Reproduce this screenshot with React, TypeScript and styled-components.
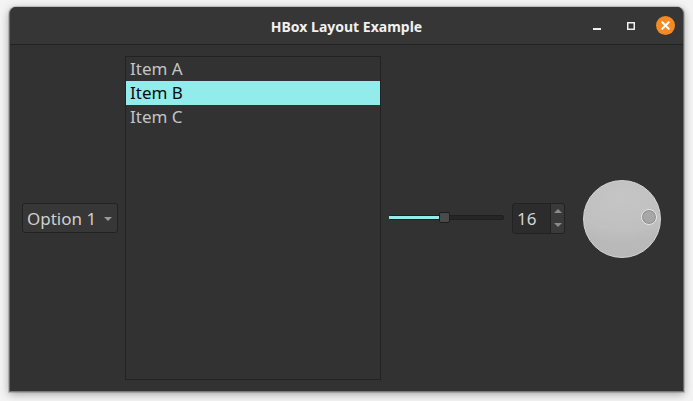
import React from "react";
import styled, { createGlobalStyle } from "styled-components";

const Global = createGlobalStyle`
  html, body { margin: 0; padding: 0; background: #f3f3f3; }
  body { width: 693px; height: 401px; overflow: hidden; font-family: "Noto Sans", "Open Sans", sans-serif; }
`;

const Stage = styled.div`
  padding: 7px 9px 9px 9px;
  display: flex;
`;

const Window = styled.div`
  width: 675px;
  height: 385px;
  display: flex;
  flex-direction: column;
  background: #323232;
  border-radius: 7px 7px 0 0;
  box-shadow: 0 2px 9px rgba(0, 0, 0, 0.35), 0 0 0 1px rgba(0, 0, 0, 0.15);
  border-bottom: 1px solid #7a7a7a;
  border-left: 1px solid #6a6a6a;
  border-right: 1px solid #6a6a6a;
  box-sizing: border-box;
  overflow: hidden;
`;

const TitleBar = styled.div`
  height: 38px;
  flex: none;
  background: #363636;
  border-bottom: 1px solid #232323;
  display: grid;
  grid-template-columns: 1fr auto 1fr;
  align-items: center;
  box-sizing: border-box;
`;

const Title = styled.div`
  grid-column: 2;
  color: #f0f0f0;
  font-weight: 700;
  font-size: 14px;
  letter-spacing: 0;
  padding-top: 1px;
`;

const Controls = styled.div`
  grid-column: 3;
  justify-self: end;
  display: flex;
  align-items: center;
  gap: 12px;
  padding-right: 7px;
`;

const CtrlBtn = styled.div`
  width: 22px;
  height: 22px;
  display: flex;
  align-items: center;
  justify-content: center;
`;

const Body = styled.div`
  flex: 1;
  display: flex;
  align-items: center;
  padding: 11px 0 11px 12px;
`;

const Combo = styled.div`
  width: 96px;
  height: 30px;
  box-sizing: border-box;
  border: 1px solid #222;
  border-radius: 3px;
  background: #373737;
  display: flex;
  align-items: center;
  padding: 0 4px 0 4px;
  color: #cfcfcf;
  font-size: 17px;
  gap: 8px;
  margin-right: 7px;
`;

const Arrow = styled.div`
  width: 0;
  height: 0;
  border-left: 4px solid transparent;
  border-right: 4px solid transparent;
  border-top: 4px solid #9a9a9a;
  margin-top: 1px;
`;

const List = styled.div`
  width: 256px;
  align-self: stretch;
  box-sizing: border-box;
  border: 1px solid #222;
  background: #323232;
  margin-right: 7px;
`;

const Item = styled.div<{ $sel?: boolean }>`
  height: 24px;
  line-height: 24px;
  padding-left: 4px;
  font-size: 17px;
  color: ${(p) => (p.$sel ? "#0c0c0c" : "#c4c4c4")};
  background: ${(p) => (p.$sel ? "#93ecec" : "transparent")};
`;

const Slider = styled.div`
  width: 116px;
  height: 12px;
  position: relative;
  margin-right: 8px;
`;

const Groove = styled.div`
  position: absolute;
  left: 1px;
  right: 0;
  top: 3px;
  height: 3px;
  background: #262626;
  border: 1px solid #1f1f1f;
  border-radius: 2px;
`;

const Fill = styled.div`
  position: absolute;
  left: 1px;
  top: 4px;
  height: 3px;
  background: #93ecec;
`;

const Handle = styled.div`
  position: absolute;
  top: 0;
  width: 11px;
  height: 11px;
  box-sizing: border-box;
  border: 1px solid #1e1e1e;
  border-radius: 2px;
  background: #4a4a4a;
`;

const Spin = styled.div`
  width: 53px;
  height: 31px;
  box-sizing: border-box;
  border: 1px solid #222;
  border-radius: 3px;
  background: #2c2c2c;
  display: flex;
  margin-right: 18px;
  overflow: hidden;
`;

const SpinText = styled.div`
  flex: 1;
  color: #d4d4d4;
  font-size: 17px;
  display: flex;
  align-items: center;
  padding-left: 4px;
`;

const SpinBtns = styled.div`
  width: 13px;
  display: flex;
  flex-direction: column;
  background: #3a3a3a;
  border-left: 1px solid #222;
`;

const SpinBtn = styled.div`
  flex: 1;
  display: flex;
  align-items: center;
  justify-content: center;
`;

const Tri = styled.div<{ $up?: boolean }>`
  width: 0;
  height: 0;
  border-left: 4px solid transparent;
  border-right: 4px solid transparent;
  ${(p) => (p.$up ? "border-bottom: 4px solid #8a8a8a;" : "border-top: 4px solid #8a8a8a;")}
`;

const Dial = styled.div`
  width: 78px;
  height: 78px;
  box-sizing: border-box;
  border-radius: 50%;
  border: 1px solid #d6d6d6;
  background: radial-gradient(ellipse 95% 60% at 50% 22%, #c5c5c5 0%, #c0c0c0 70%, #b9b9b9 100%);
  position: relative;
  margin-top: 1px;
`;

const Knob = styled.div`
  position: absolute;
  left: 57px;
  top: 28px;
  width: 16px;
  height: 16px;
  box-sizing: border-box;
  border-radius: 50%;
  border: 1px solid #e6e6e6;
  background: #a7a7a7;
  box-shadow: inset 0 0 0 1px #8f8f8f;
`;

export default function App() {
  const min = 0;
  const max = 99;
  const value = 49;
  const ratio = (value - min) / (max - min);
  const handleLeft = 1 + Math.round(ratio * (115 - 11));
  return (
    <>
      <Global />
      <Stage>
        <Window>
          <TitleBar>
            <Title>HBox Layout Example</Title>
            <Controls>
              <CtrlBtn>
                <svg width="10" height="10" viewBox="0 0 10 10">
                  <rect x="1" y="7" width="8" height="2" fill="#f0f0f0" />
                </svg>
              </CtrlBtn>
              <CtrlBtn>
                <svg width="10" height="10" viewBox="0 0 10 10">
                  <rect x="1.75" y="1.75" width="6.5" height="6.5" fill="none" stroke="#f0f0f0" strokeWidth="1.5" />
                </svg>
              </CtrlBtn>
              <CtrlBtn>
                <svg width="19" height="19" viewBox="0 0 19 19">
                  <circle cx="9.5" cy="9.5" r="9.5" fill="#f28b24" />
                  <path d="M6.3 6.3 L12.7 12.7 M12.7 6.3 L6.3 12.7" stroke="#fff" strokeWidth="2" strokeLinecap="round" />
                </svg>
              </CtrlBtn>
            </Controls>
          </TitleBar>
          <Body>
            <Combo>
              <span>Option 1</span>
              <Arrow />
            </Combo>
            <List>
              <Item>Item A</Item>
              <Item $sel>Item B</Item>
              <Item>Item C</Item>
            </List>
            <Slider>
              <Groove />
              <Fill style={{ width: handleLeft - 1 }} />
              <Handle style={{ left: handleLeft - 1 }} />
            </Slider>
            <Spin>
              <SpinText>16</SpinText>
              <SpinBtns>
                <SpinBtn>
                  <Tri $up />
                </SpinBtn>
                <SpinBtn>
                  <Tri />
                </SpinBtn>
              </SpinBtns>
            </Spin>
            <Dial>
              <Knob />
            </Dial>
          </Body>
        </Window>
      </Stage>
    </>
  );
}
